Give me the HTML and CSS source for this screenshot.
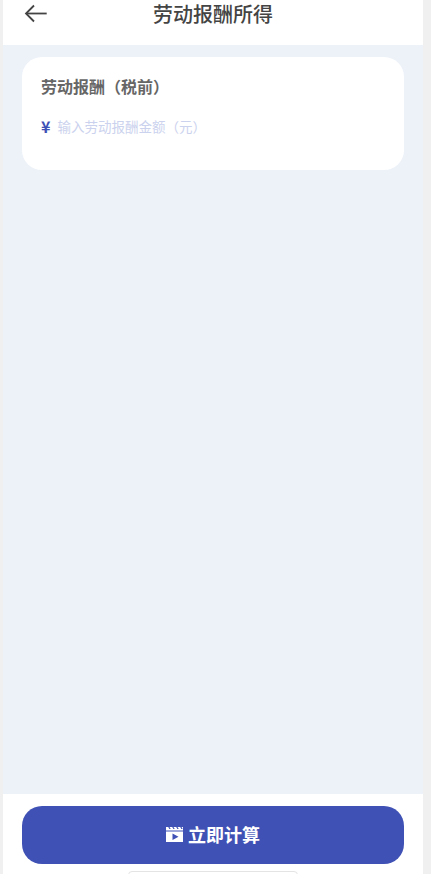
FILE: index.html
```html
<!DOCTYPE html>
<html lang="zh-CN">
<head>
    <meta charset="UTF-8">
    <meta name="viewport" content="width=device-width, initial-scale=1.0">
    <title>劳动报酬所得</title>
    <link rel="stylesheet" href="styles.css">
</head>
<body>
    <div class="page">
        <!-- Header -->
        <div class="header">
            <svg class="back-icon" viewBox="0 0 24 19" width="24" height="19" fill="none" stroke="#444" stroke-width="1.8">
                <path d="M22.7 9.5H2"/>
                <path d="M10 1.5L2 9.5l8 8"/>
            </svg>
            <h1 class="title">劳动报酬所得</h1>
        </div>

        <!-- Main Content -->
        <div class="content">
            <div class="card">
                <div class="card-label">劳动报酬（税前）</div>
                <div class="amount-row">
                    <span class="currency">¥</span>
                    <span class="placeholder">输入劳动报酬金额（元）</span>
                </div>
            </div>
        </div>

        <!-- Footer -->
        <div class="footer">
            <button class="calc-btn">
                <svg class="calc-icon" viewBox="0 0 17 16" width="17" height="16">
                    <path fill="#fff" d="M0 1h2.2L3.4 3h1.3L3.5 1h2.7l1.2 2h1.3L7.5 1h2.7l1.2 2h1.3l-1.2-2h2.7l1.2 2h1.3L15.5 1H17v3.5H0z"/>
                    <path fill="#fff" fill-rule="evenodd" d="M0 5.5h17V16H0zM6.5 7.5v6.5l6-3.2z"/>
                </svg>
                <span>立即计算</span>
            </button>
            <div class="home-pill"></div>
        </div>
    </div>
</body>
</html>
```

FILE: styles.css
```css
* {
    box-sizing: border-box;
    margin: 0;
    padding: 0;
}
html, body {
    height: 100%;
    overflow: hidden;
}
body {
    background-color: #f0f0f0;
    font-family: "Noto Sans CJK SC", "Noto Sans", sans-serif;
    color: #444;
}
.page {
    display: flex;
    flex-direction: column;
    width: 420px;
    height: 874px;
    margin-left: 3px;
    background-color: #edf2f9;
}
.header {
    position: relative;
    display: flex;
    justify-content: center;
    height: 45px;
    background-color: #fff;
}
.back-icon {
    position: absolute;
    left: 21px;
    top: 4px;
}
.title {
    font-size: 20px;
    font-weight: 500;
    line-height: 27px;
    color: #444;
}
.content {
    flex-grow: 1;
    padding: 12px 19px;
}
.card {
    height: 113px;
    padding: 17px 19px;
    background-color: #fff;
    border-radius: 20px;
}
.card-label {
    font-size: 16px;
    font-weight: 700;
    line-height: 24px;
    color: #666;
}
.amount-row {
    display: flex;
    align-items: center;
    gap: 7px;
    margin-top: 16px;
    height: 24px;
}
.currency {
    font-size: 16px;
    font-weight: 700;
    color: #3f51b5;
}
.placeholder {
    font-size: 13.5px;
    color: #cbd2ee;
}
.footer {
    display: flex;
    flex-direction: column;
    align-items: center;
    height: 80px;
    padding: 12px 19px 0;
    background-color: #fff;
    overflow: hidden;
}
.calc-btn {
    display: flex;
    align-items: center;
    justify-content: center;
    gap: 5px;
    flex-shrink: 0;
    width: 382px;
    height: 58px;
    padding-bottom: 2px;
    border: none;
    border-radius: 20px;
    background-color: #3f51b5;
    color: #fff;
    font-family: inherit;
    font-size: 18px;
    font-weight: 700;
}
.home-pill {
    flex-shrink: 0;
    width: 170px;
    height: 12px;
    margin-top: 7px;
    border: 1px solid #e4e4e4;
    border-radius: 4px;
    background-color: #fff;
}
```
